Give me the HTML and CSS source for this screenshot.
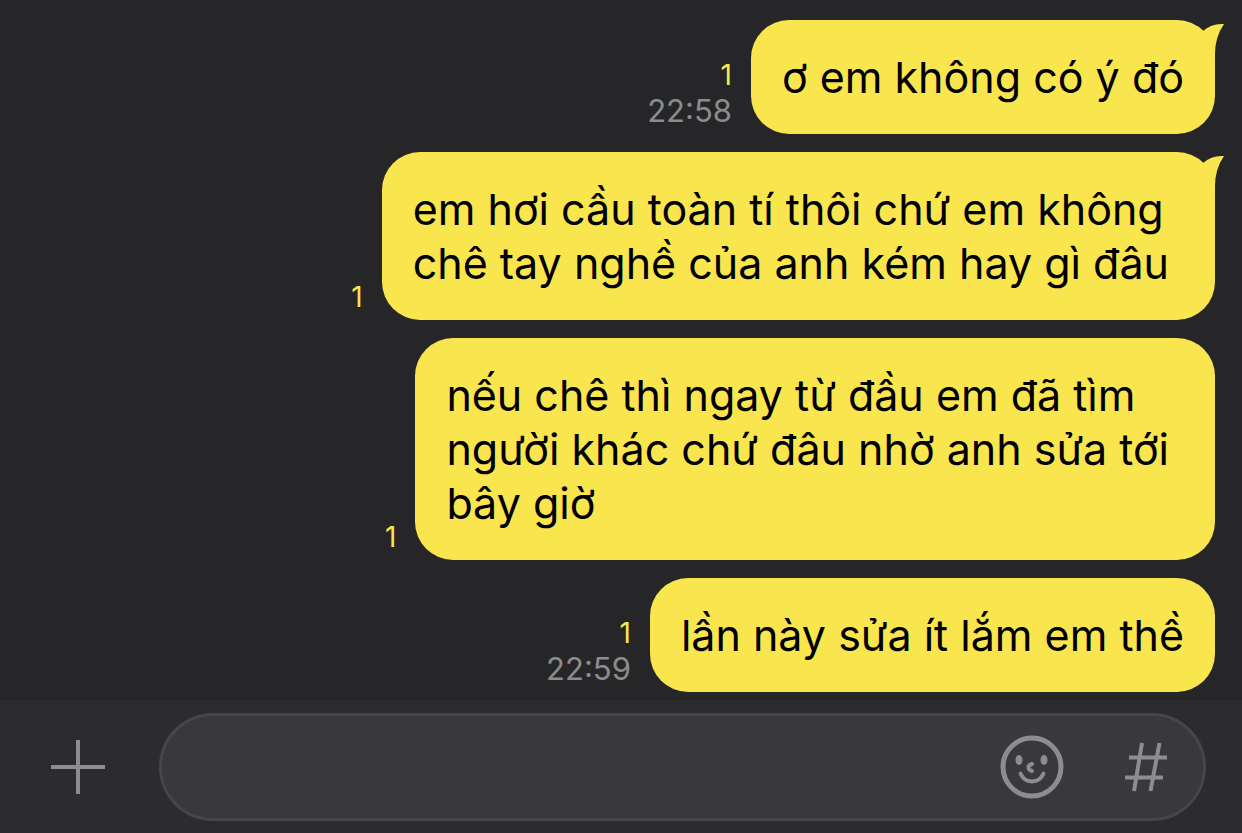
FILE: index.html
```
<!DOCTYPE html>
<html lang="vi">

<head>
  <meta charset="utf-8">
  <meta name="viewport" content="width=device-width, initial-scale=1">
  <title>Chat</title>
  <link rel="stylesheet" href="styles.css">
</head>

<body>
  <main class="messages">
    <div class="message">
      <div class="meta">
        <span class="unread">1</span>
        <time class="time">22:58</time>
      </div>
      <div class="bubble">
        ơ em không có ý đó
        <svg class="tail" viewBox="0 0 40 44" aria-hidden="true"><path d="M19 11Q28 3 40 4Q31 17 31 34V42L4 40Z"/></svg>
      </div>
    </div>

    <div class="message">
      <div class="meta">
        <span class="unread">1</span>
      </div>
      <div class="bubble multiline">
        em hơi cầu toàn tí thôi chứ em không<br>
        chê tay nghề của anh kém hay gì đâu
        <svg class="tail" viewBox="0 0 40 44" aria-hidden="true"><path d="M19 11Q28 3 40 4Q31 17 31 34V42L4 40Z"/></svg>
      </div>
    </div>

    <div class="message">
      <div class="meta">
        <span class="unread">1</span>
      </div>
      <div class="bubble multiline">
        nếu chê thì ngay từ đầu em đã tìm<br>
        người khác chứ đâu nhờ anh sửa tới<br>
        bây giờ
      </div>
    </div>

    <div class="message">
      <div class="meta">
        <span class="unread">1</span>
        <time class="time">22:59</time>
      </div>
      <div class="bubble">lần này sửa ít lắm em thề</div>
    </div>
  </main>

  <form class="composer">
    <button class="icon-button" type="button" aria-label="Thêm">
      <svg width="56" height="56" viewBox="0 0 56 56"><path class="bar" d="M28 1V55M1 28H55"/></svg>
    </button>
    <div class="field">
      <input class="field-input" type="text" aria-label="Tin nhắn">
      <button class="icon-button" type="button" aria-label="Biểu tượng cảm xúc">
        <svg width="64" height="64" viewBox="0 0 64 64">
          <circle class="line" cx="32" cy="32" r="29"/>
          <ellipse class="dot" cx="19" cy="25" rx="3.5" ry="5"/>
          <ellipse class="dot" cx="44" cy="25" rx="3.5" ry="5"/>
          <path class="line thin" d="M32 29Q28.5 30 28.5 32.5T32 36"/>
          <path class="line thin" d="M20.5 38.5C25 49 39 49 43.5 38.5"/>
        </svg>
      </button>
      <button class="icon-button" type="button" aria-label="Hashtag">
        <svg width="44" height="50" viewBox="0 0 44 50"><path class="bar" d="M18 1L10 49M35.5 1L26.5 49M5 15.5H43M1 35.5H39"/></svg>
      </button>
    </div>
  </form>
</body>

</html>
```

FILE: styles.css
```
* {
  box-sizing: border-box;
}

body {
  margin: 0;
  min-height: 100vh;
  display: flex;
  flex-direction: column;
  background-color: #262628;
  font-family: Inter, "Noto Sans", sans-serif;
}

.messages {
  flex: 1;
  display: flex;
  flex-direction: column;
  gap: 18px;
  padding: 20px 27px 8px;
}

.message {
  display: flex;
  justify-content: flex-end;
  align-items: flex-end;
  gap: 19px;
}

.meta {
  display: flex;
  flex-direction: column;
  align-items: flex-end;
  padding-bottom: 5px;
  line-height: 36px;
}

.unread {
  color: #f9e54e;
  font-size: 28px;
}

.time {
  color: #8c8c8e;
  font-size: 31px;
}

.bubble {
  position: relative;
  padding: 30px 31px;
  border-radius: 38px;
  background-color: #f9e54e;
  color: #000;
  font-size: 43px;
  line-height: 54px;
  white-space: nowrap;
}

.multiline {
  padding-right: 46px;
}

/* small ear on the top right corner */
.tail {
  position: absolute;
  top: 0;
  right: -9px;
  width: 40px;
  height: 44px;
  fill: #f9e54e;
}

.composer {
  display: flex;
  align-items: center;
  gap: 53px;
  padding: 13px 36px 12px 50px;
  background-color: #2c2c2e;
}

.field {
  flex: 1;
  display: flex;
  align-items: center;
  gap: 60px;
  height: 108px;
  padding: 0 35px;
  border: 3px solid #464648;
  border-radius: 54px;
  background-color: #39393b;
}

.field-input {
  flex: 1;
  min-width: 0;
  height: 54px;
  padding: 0;
  border: 0;
  outline: 0;
  background: transparent;
  color: #fff;
  font-family: inherit;
  font-size: 43px;
}

.icon-button {
  display: flex;
  padding: 0;
  border: 0;
  background: transparent;
  cursor: pointer;
}

.bar,
.line {
  fill: none;
  stroke: #8b8d90;
  stroke-width: 5;
}

.bar {
  stroke-width: 4;
}

.line {
  stroke-linecap: round;
}

.thin {
  stroke-width: 4;
}

.dot {
  fill: #8b8d90;
}
```
